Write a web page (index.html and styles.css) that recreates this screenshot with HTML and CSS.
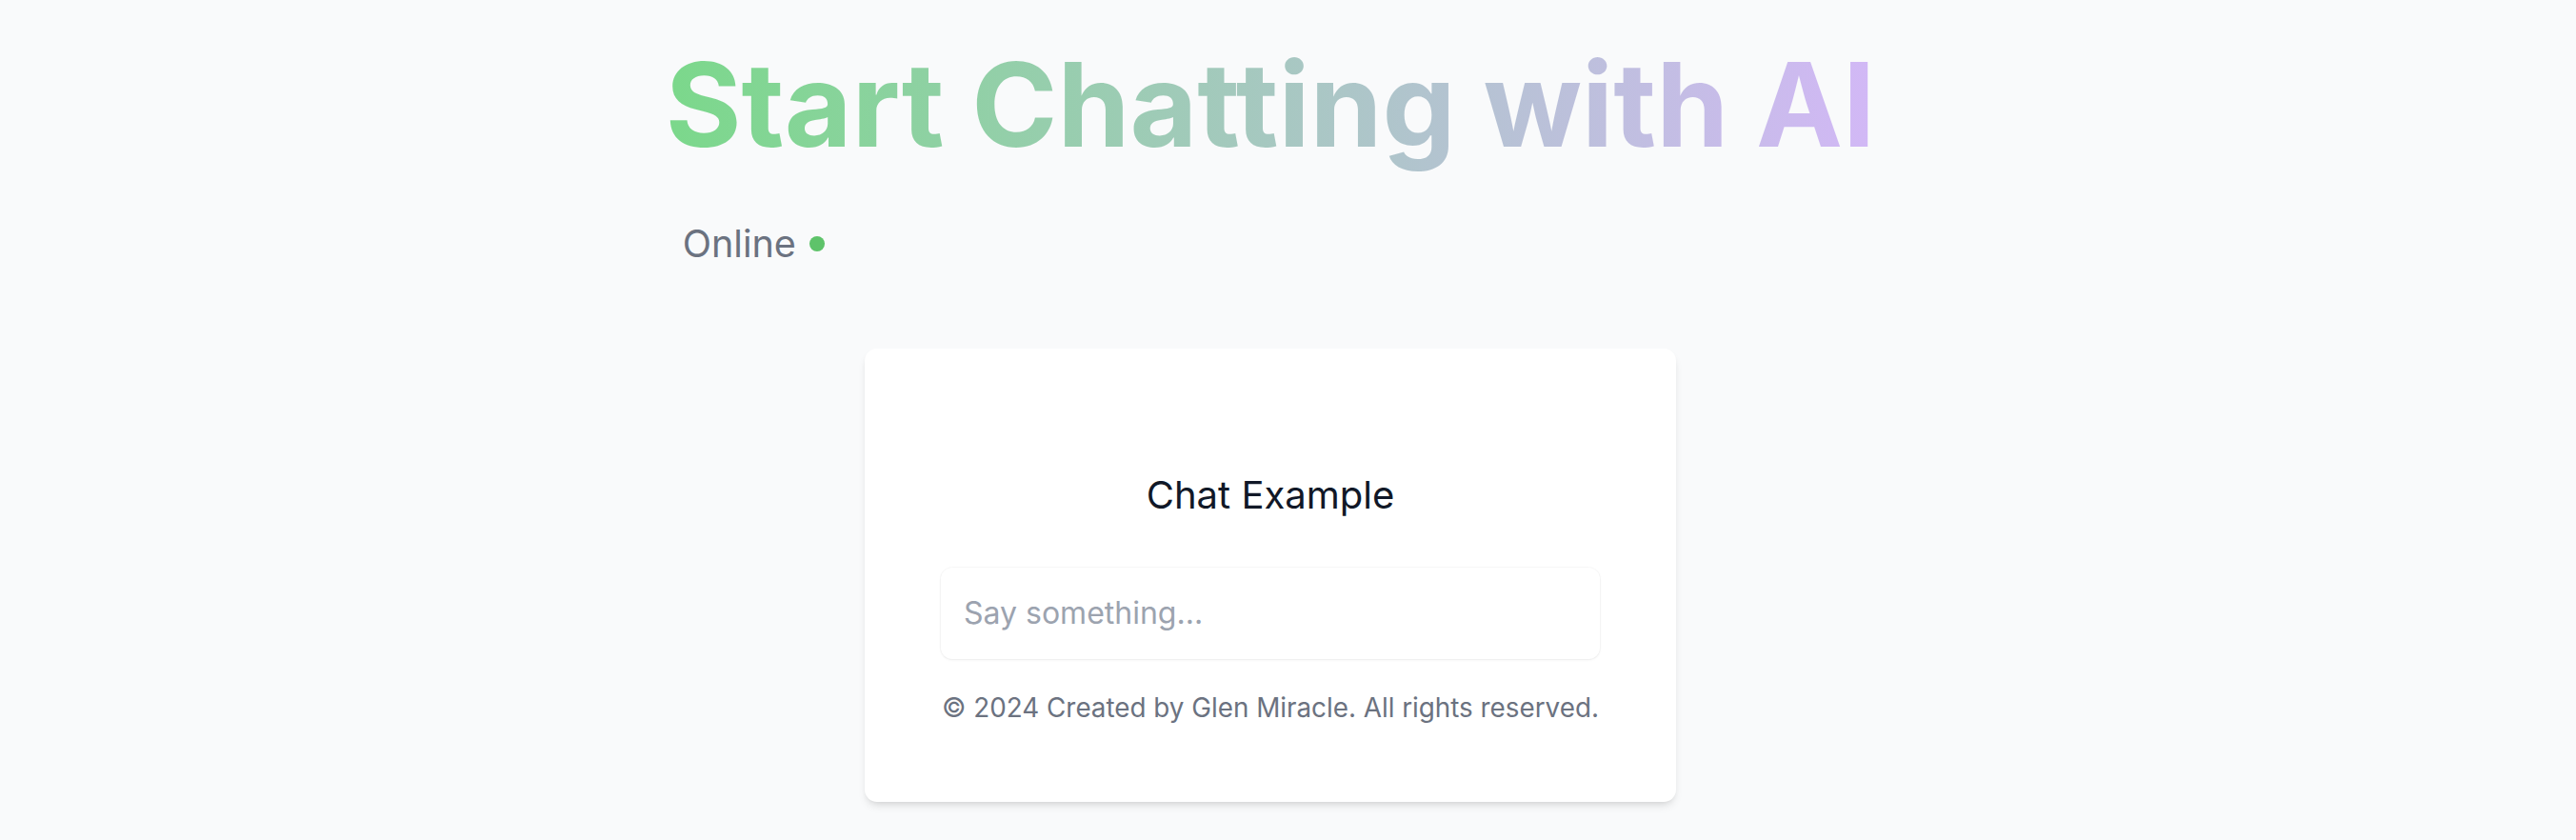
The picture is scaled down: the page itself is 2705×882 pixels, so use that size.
FILE: index.html
```html
<!DOCTYPE html>
<html lang="en">
<head>
<meta charset="utf-8">
<title>Start Chatting with AI</title>
<link rel="stylesheet" href="styles.css">
</head>
<body>
<main class="page">
  <header class="hero">
    <h1 class="title">Start Chatting with AI</h1>
    <div class="status">
      <span class="status-text">Online</span>
      <span class="status-dot"></span>
    </div>
  </header>
  <section class="card">
    <h2 class="card-title">Chat Example</h2>
    <input class="chat-input" type="text" placeholder="Say something...">
    <p class="footer">© 2024 Created by Glen Miracle. All rights reserved.</p>
  </section>
</main>
</body>
</html>
```
FILE: styles.css
```css
* { box-sizing: border-box; }
html, body { margin: 0; padding: 0; }
body {
  background: #f9fafb;
  font-family: Inter, "Noto Sans", "Liberation Sans", sans-serif;
  min-height: 882px;
}
.page {
  display: flex;
  flex-direction: column;
  align-items: center;
  padding: 34px 37px 0 0;
}
.hero {
  display: flex;
  flex-direction: column;
  align-items: flex-start;
}
.title {
  margin: 0;
  font-size: 122px;
  font-weight: 700;
  line-height: 1.25;
  display: inline-block;
  background: linear-gradient(90deg, #7bd88b 0%, #d2b8f6 100%);
  -webkit-background-clip: text;
  background-clip: text;
  color: transparent;
}
.status {
  display: flex;
  align-items: center;
  gap: 14px;
  margin-top: 45px;
  padding-left: 18px;
}
.status-text {
  font-size: 39.6px;
  line-height: 48px;
  color: #6b7280;
}
.status-dot {
  width: 16px;
  height: 16px;
  border-radius: 50%;
  background: #5ec36a;
}
.card {
  margin-top: 86px;
  width: 852px;
  background: #ffffff;
  border-radius: 13px;
  box-shadow: 0 6px 10px -2px rgba(0,0,0,0.10), 0 3px 6px -3px rgba(0,0,0,0.10);
  padding: 80px 80px 82px;
  display: flex;
  flex-direction: column;
  align-items: stretch;
}
.card-title {
  margin: 49px 0 0;
  font-size: 40px;
  font-weight: 400;
  line-height: normal;
  color: #111827;
  text-align: center;
}
.chat-input {
  margin-top: 52px;
  height: 96px;
  border: none;
  outline: none;
  border-radius: 12px;
  background: #fff;
  box-shadow: 0 0 0 1px rgba(0,0,0,0.025), 0 1px 3px rgba(0,0,0,0.06);
  padding: 0 24px;
  font-family: inherit;
  font-size: 32px;
  color: #111827;
}
.chat-input::placeholder { color: #9ca3af; }
.footer {
  margin: 34px 0 0;
  font-size: 27.8px;
  line-height: normal;
  color: #6b7280;
  text-align: center;
  white-space: nowrap;
}
```
